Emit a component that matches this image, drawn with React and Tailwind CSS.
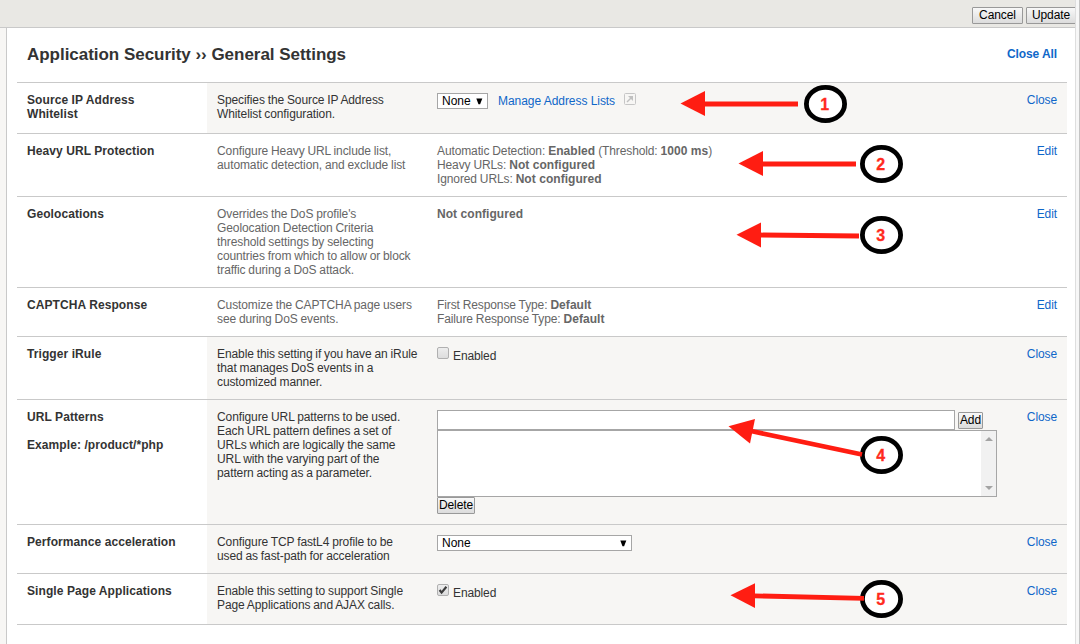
import React from "react";

function Row({ label, desc, action, open, height, children }) {
  return (
    <div className={`flex border-t border-[#c9c9c9] ${height}`}>
      <div className="w-[190px] shrink-0 bg-white px-2.5 pt-2.5 font-bold tracking-[0.08px] text-[#333]">{label}</div>
      <div className={`flex flex-1 pt-2.5 ${open ? "bg-[#f7f6f4] text-[#333]" : "bg-white text-[#666]"}`}>
        <div className="w-[220px] shrink-0 whitespace-nowrap pl-2.5 tracking-[-0.1px] [word-spacing:-0.35px]">
          {desc.map((line) => (
            <div key={line}>{line}</div>
          ))}
        </div>
        <div className="flex-1 pl-2.5">{children}</div>
        <a className="pr-2.5 tracking-[-0.1px] text-[#0f67c9]">{action}</a>
      </div>
    </div>
  );
}

function Value({ name, children }) {
  return (
    <div className="tracking-[-0.12px] [word-spacing:-0.2px]">
      {name} {children}
    </div>
  );
}

function Strong({ children }) {
  return <b className="tracking-[0.05px] [word-spacing:0px]">{children}</b>;
}

function Button({ className, children }) {
  return (
    <button
      className={`flex h-[17px] items-center justify-center whitespace-nowrap rounded-[1px] border border-[#999] bg-linear-to-b from-[#f8f8f8] to-[#dcdcdc] pb-0.5 tracking-[-0.1px] text-black ${className}`}
    >
      {children}
    </button>
  );
}

function Select({ className, children }) {
  return (
    <div className={`flex h-4 items-center justify-between border border-[#a6a6a6] bg-white pl-1 text-black ${className}`}>
      <span>{children}</span>
      <svg className="shrink-0" width="7" height="7" viewBox="0 0 7 7">
        <path d="M0.3 0.5H6.3L4.1 6.2H2.5Z" fill="#000" />
      </svg>
    </div>
  );
}

function Check({ checked }) {
  return (
    <div className="flex">
      <svg className="mr-1" width="12" height="12" viewBox="0 0 12 12">
        <defs>
          <linearGradient id="box" x1="0" y1="0" x2="0" y2="1">
            <stop offset="0" stopColor="#eee" />
            <stop offset="1" stopColor="#dcdcdc" />
          </linearGradient>
        </defs>
        <rect x="0.5" y="0.5" width="11" height="11" rx="1.5" fill="url(#box)" stroke="#b0b0b0" />
        {checked && <path d="M2.6 6L4.6 8.6L9.4 2.8" fill="none" stroke="#3c3c3c" strokeWidth="2.2" />}
      </svg>
      <span className="pt-0.5 tracking-[-0.12px]">Enabled</span>
    </div>
  );
}

const callouts = [
  { n: 1, cx: 825.5, cy: 104, head: "680.5,103.5 705,91 705,116", line: [704, 104, 798, 104] },
  { n: 2, cx: 881.5, cy: 164, head: "738.5,163.5 763,151 763,176", line: [762, 164, 856, 164] },
  { n: 3, cx: 881.5, cy: 235, head: "736.5,234.7 761,222.5 761,247.5", line: [760, 235, 859, 236] },
  { n: 4, cx: 881.5, cy: 455, head: "728.5,426.3 755,419 750,443.5", line: [751, 431, 862, 454.5] },
  { n: 5, cx: 881.5, cy: 599, head: "730.5,595.3 755,583.3 755,608", line: [754, 595.8, 864, 598.3] },
];

function Callouts() {
  return (
    <svg className="pointer-events-none absolute left-0 top-0" width="1080" height="644" viewBox="0 0 1080 644">
      {callouts.map((c) => (
        <g key={c.n}>
          <ellipse cx={c.cx} cy={c.cy} rx="19.1" ry="16.7" fill="#fff" stroke="#000" strokeWidth="4.8" />
          <line x1={c.line[0]} y1={c.line[1]} x2={c.line[2]} y2={c.line[3]} stroke="#ff1d12" strokeWidth="4.8" />
          <polygon points={c.head} fill="#ff1d12" />
          <text x={c.cx - 0.7} y={c.cy + 5.5} textAnchor="middle" fontSize="16" fontWeight="700" fill="#ff2a1d" stroke="#ff2a1d" strokeWidth="0.3">
            {c.n}
          </text>
        </g>
      ))}
    </svg>
  );
}

export default function App() {
  return (
    <div className="relative flex h-[644px] w-[1080px] overflow-hidden bg-[#f7f6f4] font-['Liberation_Sans',Arial,sans-serif] text-[12px] leading-[14px]">
      <div className="flex w-[1075px] shrink-0 flex-col overflow-hidden">
        <div className="flex h-7 shrink-0 justify-end gap-[3px] border-b border-[#c9c9c9] bg-[#e9e8e4] pt-[7px]">
          <Button className="w-[51px]">Cancel</Button>
          <Button className="-mr-px w-[50px]">Update</Button>
        </div>
        <div className="ml-1.5 flex-1 border-l border-[#c9c9c9] bg-white pl-2.5 pr-2">
          <div className="flex h-[54px] items-center justify-between px-2.5">
            <h1 className="text-[17px] font-bold leading-5 tracking-[-0.03px] text-[#333]">Application Security ›› General Settings</h1>
            <a className="pb-0.5 font-bold tracking-[-0.1px] text-[#0f67c9]">Close All</a>
          </div>
          <Row height="h-[51px]" open action="Close" label={<>Source IP Address<br />Whitelist</>} desc={["Specifies the Source IP Address", "Whitelist configuration."]}>
            <div className="flex">
              <Select className="w-[51px] pr-1">None</Select>
              <a className="ml-2.5 mt-px tracking-[-0.05px] text-[#0f67c9]">Manage Address Lists</a>
              <svg className="ml-[9px]" width="12" height="12" viewBox="0 0 12 12" fill="none">
                <rect x="0.5" y="0.5" width="11" height="11" rx="1" fill="#f7f6f4" stroke="#c6c6c6" />
                <path d="M3 9L7.5 4.5" stroke="#c0c0c0" strokeWidth="1.4" />
                <path d="M4 3H9V8Z" fill="#c0c0c0" />
              </svg>
            </div>
          </Row>
          <Row height="h-[63px]" action="Edit" label="Heavy URL Protection" desc={["Configure Heavy URL include list,", "automatic detection, and exclude list"]}>
            <Value name="Automatic Detection:">
              <Strong>Enabled</Strong> (Threshold: <Strong>1000 ms</Strong>)
            </Value>
            <Value name="Heavy URLs:"><Strong>Not configured</Strong></Value>
            <Value name="Ignored URLs:"><Strong>Not configured</Strong></Value>
          </Row>
          <Row
            height="h-[91px]"
            action="Edit"
            label="Geolocations"
            desc={["Overrides the DoS profile's", "Geolocation Detection Criteria", "threshold settings by selecting", "countries from which to allow or block", "traffic during a DoS attack."]}
          >
            <Strong>Not configured</Strong>
          </Row>
          <Row height="h-[49px]" action="Edit" label="CAPTCHA Response" desc={["Customize the CAPTCHA page users", "see during DoS events."]}>
            <Value name="First Response Type:"><Strong>Default</Strong></Value>
            <Value name="Failure Response Type:"><Strong>Default</Strong></Value>
          </Row>
          <Row height="h-[63px]" open action="Close" label="Trigger iRule" desc={["Enable this setting if you have an iRule", "that manages DoS events in a", "customized manner."]}>
            <Check />
          </Row>
          <Row
            height="h-[125px]"
            open
            action="Close"
            label={<>URL Patterns<br /><br />Example: /product/*php</>}
            desc={["Configure URL patterns to be used.", "Each URL pattern defines a set of", "URLs which are logically the same", "URL with the varying part of the", "pattern acting as a parameter."]}
          >
            <div className="flex h-5 gap-[3px]">
              <input className="h-5 w-[518px] border border-[#a6a6a6] bg-white" />
              <Button className="mt-0.5 w-[25px]">Add</Button>
            </div>
            <div className="flex h-[67px] w-[560px] justify-end border border-[#a6a6a6] bg-white">
              <div className="flex w-[15px] flex-col items-center justify-between bg-[#f1f1f1] pb-1.5 pt-1.5">
                <svg width="8" height="4" viewBox="0 0 8 4"><path d="M0 4H8L4 0Z" fill="#a3a3a3" /></svg>
                <svg width="8" height="4" viewBox="0 0 8 4"><path d="M0 0H8L4 4Z" fill="#a3a3a3" /></svg>
              </div>
            </div>
            <Button className="w-[38px]">Delete</Button>
          </Row>
          <Row height="h-[49px]" open action="Close" label="Performance acceleration" desc={["Configure TCP fastL4 profile to be", "used as fast-path for acceleration"]}>
            <Select className="w-[195px] pr-1">None</Select>
          </Row>
          <Row height="h-[51px]" open action="Close" label="Single Page Applications" desc={["Enable this setting to support Single", "Page Applications and AJAX calls."]}>
            <Check checked />
          </Row>
          <div className="border-t border-[#c9c9c9]" />
        </div>
      </div>
      <div className="w-[5px] shrink-0 border-l border-r border-l-[#dedede] border-r-[#c4c4c4] bg-[#f7f7f7]" />
      <Callouts />
    </div>
  );
}
